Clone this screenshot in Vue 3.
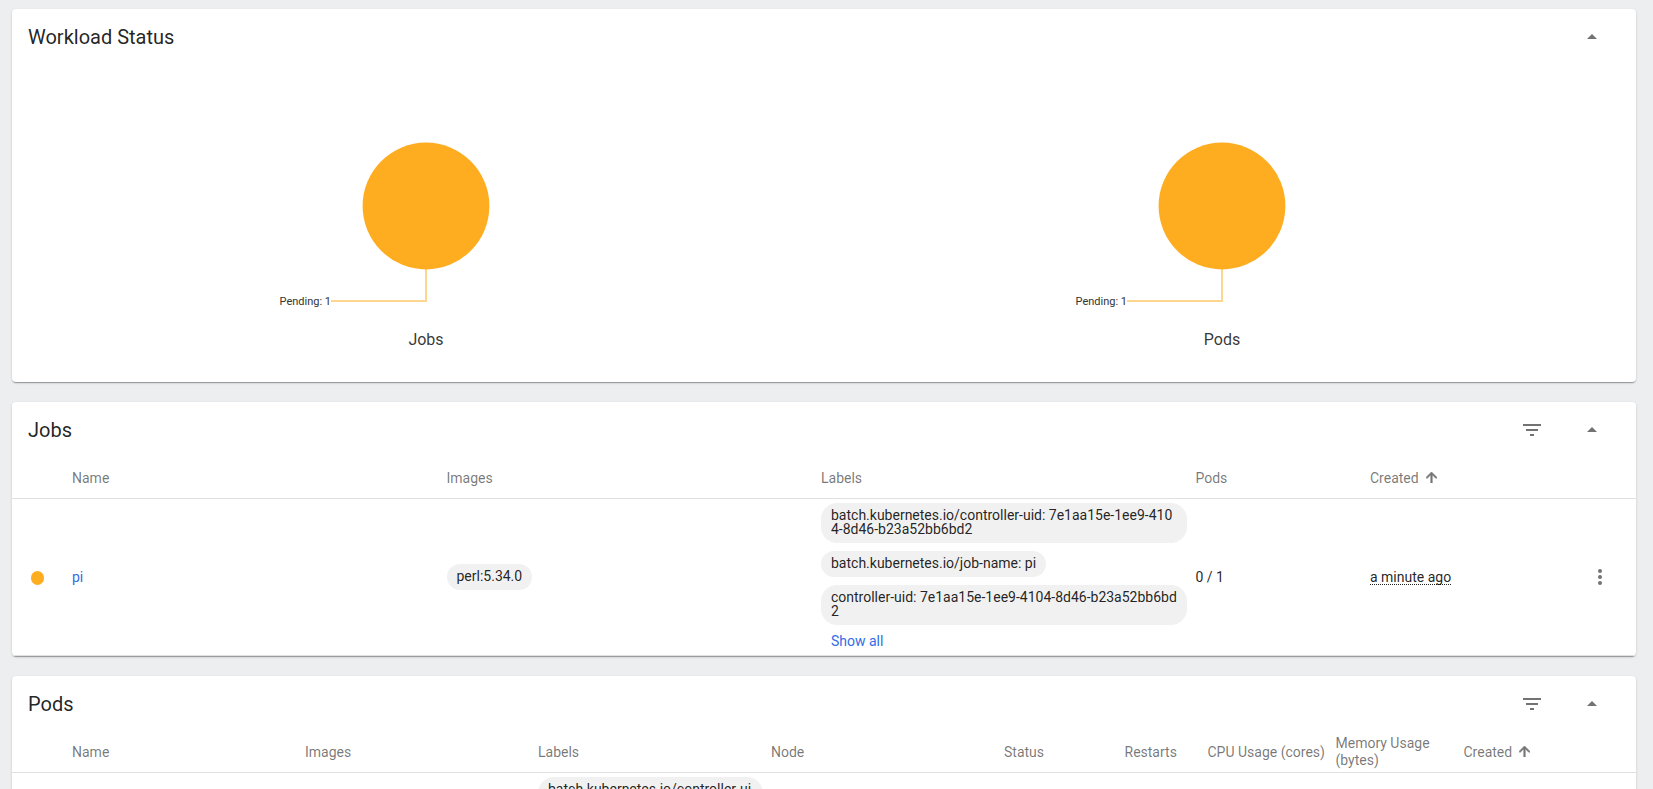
<script setup>
const charts = ['Jobs', 'Pods']
const jobLabels = [
  'batch.kubernetes.io/controller-uid: 7e1aa15e-1ee9-4104-8d46-b23a52bb6bd2',
  'batch.kubernetes.io/job-name: pi',
  'controller-uid: 7e1aa15e-1ee9-4104-8d46-b23a52bb6bd2',
]
const jobCols = ['', 'Name', 'Images', 'Labels', 'Pods', 'Created', '']
const podCols = ['', 'Name', 'Images', 'Labels', 'Node', 'Status', 'Restarts', 'CPU Usage (cores)', 'Memory Usage (bytes)', 'Created', '']
const arrowUp = 'M4 12l1.41 1.41L11 7.83V20h2V7.83l5.58 5.59L20 12l-8-8-8 8z'
</script>

<template>
  <main class="page">
    <section class="card status-card">
      <header class="card-header">
        <h2>Workload Status</h2>
        <svg class="toggle" viewBox="0 0 10 5"><path d="M0 5L5 0l5 5z" /></svg>
      </header>
      <div class="charts">
        <figure v-for="name in charts" :key="name">
          <svg class="pie" width="796" height="260" viewBox="0 0 796 260">
            <polyline points="303,236 398,236 398,203" />
            <circle cx="398" cy="141" r="63.4" />
            <text x="303" y="240" text-anchor="end">Pending: 1</text>
          </svg>
          <figcaption>{{ name }}</figcaption>
        </figure>
      </div>
    </section>

    <section class="card jobs-card">
      <header class="card-header">
        <h2>Jobs</h2>
        <svg class="filter" viewBox="0 0 18 12"><path d="M7 12h4v-2H7v2zM0 0v2h18V0H0zm3 7h12V5H3v2z" /></svg>
        <svg class="toggle" viewBox="0 0 10 5"><path d="M0 5L5 0l5 5z" /></svg>
      </header>
      <div class="row head jobs">
        <div v-for="(c, i) in jobCols" :key="i" class="cell">
          <span>{{ c }}</span>
          <svg v-if="c === 'Created'" class="sort" viewBox="4 4 16 16"><path :d="arrowUp" /></svg>
        </div>
      </div>
      <div class="row body jobs">
        <div class="cell"><i class="dot"></i></div>
        <div class="cell"><a>pi</a></div>
        <div class="cell"><span class="chip">perl:5.34.0</span></div>
        <div class="cell labels">
          <span v-for="l in jobLabels" :key="l" class="chip">{{ l }}</span>
          <a class="show-all">Show all</a>
        </div>
        <div class="cell">0 / 1</div>
        <div class="cell"><span class="ago">a minute ago</span></div>
        <div class="cell menu">
          <svg viewBox="0 0 4 16"><circle cx="2" cy="2" r="2" /><circle cx="2" cy="8" r="2" /><circle cx="2" cy="14" r="2" /></svg>
        </div>
      </div>
    </section>

    <section class="card pods-card">
      <header class="card-header">
        <h2>Pods</h2>
        <svg class="filter" viewBox="0 0 18 12"><path d="M7 12h4v-2H7v2zM0 0v2h18V0H0zm3 7h12V5H3v2z" /></svg>
        <svg class="toggle" viewBox="0 0 10 5"><path d="M0 5L5 0l5 5z" /></svg>
      </header>
      <div class="row head pods">
        <div v-for="(c, i) in podCols" :key="i" class="cell">
          <span>{{ c }}</span>
          <svg v-if="c === 'Created'" class="sort" viewBox="4 4 16 16"><path :d="arrowUp" /></svg>
        </div>
      </div>
      <div class="row body pods">
        <div class="cell"></div>
        <div class="cell"></div>
        <div class="cell"></div>
        <div class="cell labels"><span class="chip">{{ jobLabels[0] }}</span></div>
      </div>
    </section>
  </main>
</template>

<style>
body { background: #edeef0; overflow: hidden; }
</style>

<style scoped>
.page {
  box-sizing: border-box;
  height: 789px;
  overflow: hidden;
  padding: 9px 17px 0 12px;
  display: flex;
  flex-direction: column;
  gap: 20px;
  background: #edeef0;
  font: 14px/17px Roboto, sans-serif;
  color: rgba(0, 0, 0, 0.87);
}
.card {
  flex: none;
  box-sizing: border-box;
  background: #fff;
  border-radius: 4px;
  box-shadow: 0 2px 1px -1px rgba(0, 0, 0, 0.2), 0 1px 1px 0 rgba(0, 0, 0, 0.14), 0 1px 3px 0 rgba(0, 0, 0, 0.12);
}
.status-card { height: 373px; }
.jobs-card { height: 254px; }
.card-header {
  height: 56px;
  display: flex;
  align-items: center;
  padding: 0 39px 0 16px;
}
h2 {
  margin: 0 auto 0 0;
  font-size: 20px;
  font-weight: 400;
  line-height: 24px;
}
.toggle { width: 10px; height: 5px; margin-bottom: 1px; fill: #737373; }
.filter { width: 18px; height: 12px; margin-right: 46px; fill: #737373; }
.charts { display: flex; padding: 0 16px; }
figure { margin: 0; width: 796px; }
.pie { display: block; }
.pie circle { fill: #ffad20; }
.pie polyline { fill: none; stroke: #ffad20; stroke-width: 2; opacity: 0.5; }
.pie text { font-size: 11px; fill: #333; }
figcaption {
  text-align: center;
  font-size: 16px;
  line-height: 20px;
  margin-top: 5px;
  color: rgba(0, 0, 0, 0.8);
}
.row { display: grid; align-items: center; }
.jobs { grid-template-columns: 60px 374.5px 374.5px 374.5px 174.5px 174.5px 1fr; }
.pods { grid-template-columns: 60px 233px 233px 233px 233px 120.5px 83px 128px 128px 128px 1fr; }
.head {
  height: 40px;
  border-bottom: 1px solid #e0e0e0;
  color: rgba(0, 0, 0, 0.54);
}
.cell { display: flex; align-items: center; }
.sort { width: 11px; height: 11px; margin: 0 0 1px 7px; flex: none; fill: #757575; stroke: #757575; stroke-width: 1; }
.body.jobs { height: 156px; border-bottom: 1px solid #e0e0e0; }
.body.pods { align-items: start; }
.dot { width: 13.5px; height: 13.5px; margin: 2px 0 0 18.5px; border-radius: 50%; background: #ffad20; }
a { color: #326de6; }
.labels {
  flex-direction: column;
  align-items: flex-start;
  gap: 8px;
  padding: 4px 8.5px 0 0;
}
.body.jobs .labels { align-self: start; }
.chip {
  box-sizing: border-box;
  max-width: 100%;
  padding: 5px 10px 7px;
  border-radius: 16px;
  background: #f1f1f1;
  line-height: 14px;
  word-break: break-all;
}
.show-all { padding-left: 10px; }
.ago { line-height: 14px; border-bottom: 1px dotted rgba(0, 0, 0, 0.87); }
.menu { justify-content: flex-end; padding-right: 34px; }
.menu svg { width: 4px; height: 16px; fill: #737373; }
</style>
